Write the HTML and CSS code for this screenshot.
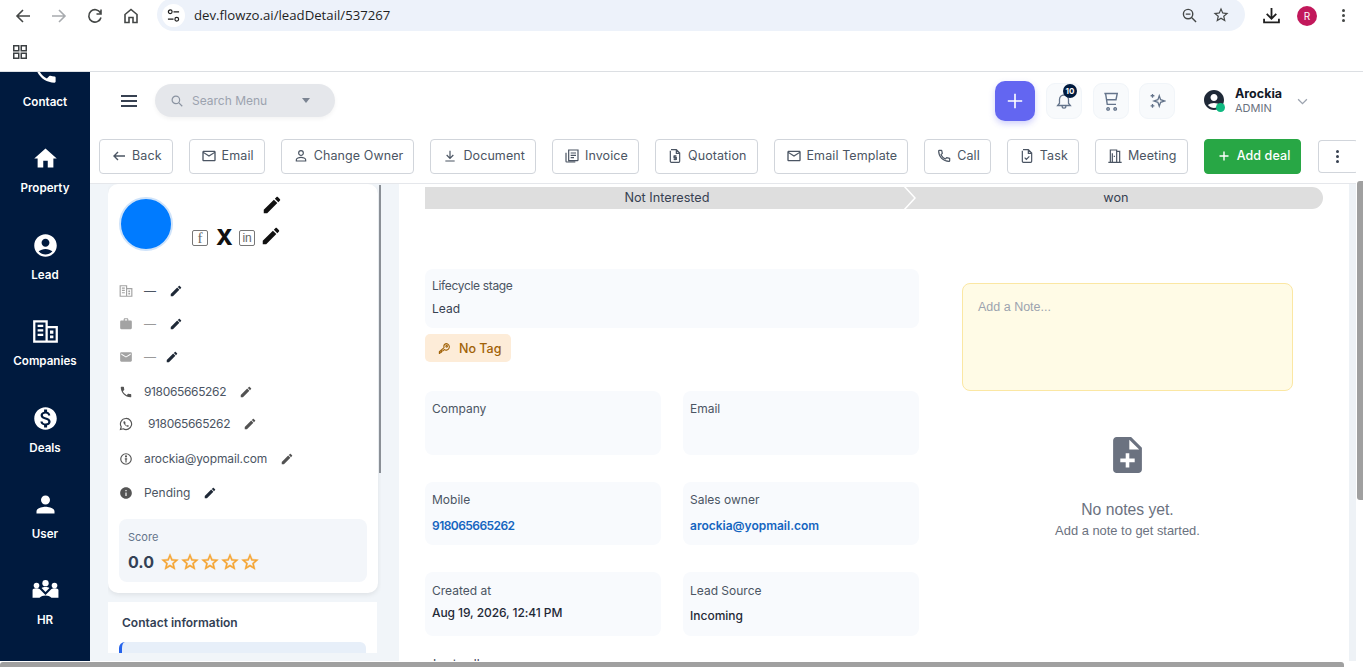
FILE: index.html
```html
<!DOCTYPE html>
<html lang="en">
<head>
<meta charset="utf-8">
<title>Lead detail</title>
<link rel="stylesheet" href="styles.css">
</head>
<body>
<svg class="sprite" aria-hidden="true">
  <symbol id="phone" viewBox="0 0 24 24"><path d="M6.62 10.79c1.44 2.83 3.76 5.14 6.59 6.59l2.2-2.2c.27-.27.67-.36 1.02-.24 1.12.37 2.33.57 3.57.57.55 0 1 .45 1 1V20c0 .55-.45 1-1 1-9.39 0-17-7.61-17-17 0-.55.45-1 1-1h3.5c.55 0 1 .45 1 1 0 1.25.2 2.45.57 3.57.11.35.03.74-.25 1.02l-2.2 2.2z"/></symbol>
  <symbol id="home" viewBox="0 0 24 24"><path d="M10 20v-6h4v6h5v-8h3L12 3 2 12h3v8z"/></symbol>
  <symbol id="account" viewBox="0 0 24 24"><path d="M12 2C6.48 2 2 6.48 2 12s4.48 10 10 10 10-4.48 10-10S17.52 2 12 2zm0 4c1.93 0 3.5 1.57 3.5 3.5S13.93 13 12 13s-3.5-1.57-3.5-3.5S10.07 6 12 6zm0 14c-2.03 0-4.43-.82-6.14-2.88C7.55 15.8 9.68 15 12 15s4.45.8 6.14 2.12C16.43 19.18 14.03 20 12 20z"/></symbol>
  <symbol id="company" viewBox="0 0 24 24"><path fill-rule="evenodd" d="M1 2h13v5h9v15H1zM3 4v16h9V4zm11 5v11h7V9zM5 6h5v2H5zm0 4h5v2H5zm0 4h5v2H5zm11-3h3v3h-3zm0 4.500h3v2.500h-3z"/></symbol>
  <symbol id="money" viewBox="0 0 24 24"><path d="M12 2C6.48 2 2 6.480 2 12s4.480 10 10 10 10-4.480 10-10S17.520 2 12 2zm1.410 16.090V20h-2.670v-1.930c-1.710-.36-3.160-1.460-3.270-3.400h1.960c.1 1.050.82 1.870 2.650 1.870 1.960 0 2.400-.98 2.400-1.590 0-.83-.44-1.610-2.670-2.140-2.480-.6-4.180-1.620-4.180-3.670 0-1.720 1.390-2.840 3.110-3.210V4h2.670v1.950c1.860.45 2.790 1.860 2.850 3.390H14.300c-.05-1.110-.64-1.870-2.220-1.870-1.500 0-2.400.68-2.400 1.640 0 .84.65 1.390 2.670 1.910s4.180 1.390 4.180 3.910c-.01 1.830-1.380 2.830-3.120 3.160z"/></symbol>
  <symbol id="person" viewBox="0 0 24 24"><path d="M12 12c2.210 0 4-1.790 4-4s-1.790-4-4-4-4 1.790-4 4 1.790 4 4 4zm0 2c-2.670 0-8 1.340-8 4v2h16v-2c0-2.660-5.330-4-8-4z"/></symbol>
  <symbol id="group" viewBox="0 0 24 24"><circle cx="12" cy="5.500" r="2.800"/><circle cx="4" cy="7.500" r="2.500"/><circle cx="20" cy="7.500" r="2.500"/><path d="M0.500 11.500c0-.8 1.500-1.500 3.500-1.500 1 0 1.900.2 2.700.6l5.300 5.400 5.300-5.400c.8-.4 1.700-.6 2.700-.6 2 0 3.500.7 3.500 1.500v7h-6.200c-1.400-1.300-3.300-2-5.300-2s-3.900.7-5.300 2H.5zM8.500 9.800c.9-.7 2.100-1 3.500-1s2.600.3 3.500 1L12 13.300z"/></symbol>
  <symbol id="edit" viewBox="0 0 24 24"><path d="M3 17.250V21h3.750L17.810 9.940l-3.750-3.750L3 17.250zM20.710 7.040c.39-.39.39-1.020 0-1.410l-2.340-2.340c-.39-.39-1.020-.39-1.410 0l-1.830 1.830 3.750 3.750 1.830-1.830z"/></symbol>
  <symbol id="work" viewBox="0 0 24 24"><path d="M20 6h-4V4c0-1.110-.89-2-2-2h-4c-1.110 0-2 .89-2 2v2H4c-1.110 0-1.990.89-1.990 2L2 19c0 1.110.89 2 2 2h16c1.110 0 2-.89 2-2V8c0-1.110-.89-2-2-2zm-6 0h-4V4h4v2z"/></symbol>
  <symbol id="mail" viewBox="0 0 24 24"><path d="M20 4H4c-1.100 0-2 .9-2 2v12c0 1.100.9 2 2 2h16c1.100 0 2-.9 2-2V6c0-1.100-.9-2-2-2zm0 4l-8 5-8-5V6l8 5 8-5v2z"/></symbol>
  <symbol id="mailo" viewBox="0 0 24 24"><path d="M20 4H4c-1.100 0-1.990.9-1.990 2L2 18c0 1.100.9 2 2 2h16c1.100 0 2-.9 2-2V6c0-1.100-.9-2-2-2zm0 14H4V8l8 5 8-5v10zm-8-7L4 6h16l-8 5z"/></symbol>
  <symbol id="info" viewBox="0 0 24 24"><path d="M12 2C6.480 2 2 6.480 2 12s4.480 10 10 10 10-4.480 10-10S17.520 2 12 2zm1 15h-2v-6h2v6zm0-8h-2V7h2v2z"/></symbol>
  <symbol id="star" viewBox="0 0 24 24"><path d="M22 9.240l-7.190-.62L12 2 9.190 8.630 2 9.240l5.460 4.730L5.820 21 12 17.270 18.180 21l-1.630-7.030L22 9.240zM12 15.400l-3.760 2.270 1-4.280-3.320-2.880 4.380-.38L12 6.100l1.710 4.040 4.380.38-3.320 2.880 1 4.280L12 15.400z"/></symbol>
  <symbol id="noteadd" viewBox="4 2 16 20"><path d="M14 2H6c-1.100 0-1.990.9-1.990 2L4 20c0 1.100.89 2 1.990 2H18c1.100 0 2-.9 2-2V8l-6-6zm2 14h-3v3h-2v-3H8v-2h3v-3h2v3h3v2zm-3-7V3.500L18.500 9H13z"/></symbol>
  <symbol id="personline" viewBox="0 0 24 24"><path fill="none" stroke="currentColor" stroke-width="1.800" d="M12 4a3.500 3.500 0 1 1 0 7 3.500 3.500 0 0 1 0-7zM5 19.500v-2c0-2 4-3.500 7-3.500s7 1.500 7 3.500v2z"/></symbol>
  <symbol id="download" viewBox="0 0 24 24"><path fill="none" stroke="currentColor" stroke-width="1.800" d="M12 4v11M7 10.500l5 5 5-5M5 19.500h14"/></symbol>
  <symbol id="invoice" viewBox="0 0 24 24"><path fill="none" stroke="currentColor" stroke-width="1.800" d="M7 3h14v15a1 1 0 0 1-1 1H7zM3 7v13a1 1 0 0 0 1 1h13M10 7.500h8M10 11h8M10 14.500h5"/></symbol>
  <symbol id="quote" viewBox="0 0 24 24"><path fill="none" stroke="currentColor" stroke-width="1.800" d="M6 2.500h8l5 5V20a1.500 1.500 0 0 1-1.500 1.500h-11A1.500 1.500 0 0 1 5 20V4M14 3v5h5M14.500 12h-4v2.500h3.500V17h-4M12 10.500v8"/></symbol>
  <symbol id="callline" viewBox="0 0 24 24"><path fill="none" stroke="currentColor" stroke-width="1.800" stroke-linejoin="round" d="M5 3.500h3.500l1 4.500-2 2c1.400 2.800 3.700 5.100 6.500 6.500l2-2 4.500 1v3.500c0 .6-.4 1-1 1C10.700 20 4 13.300 4 4.500c0-.6.400-1 1-1z"/></symbol>
  <symbol id="task" viewBox="0 0 24 24"><path fill="none" stroke="currentColor" stroke-width="1.800" d="M6 2.500h8l5 5V20a1.500 1.500 0 0 1-1.500 1.500h-11A1.500 1.500 0 0 1 5 20V4M14 3v5h5M8.500 14.500l2.500 2.500 4.500-4.500"/></symbol>
  <symbol id="door" viewBox="0 0 24 24"><path fill="none" stroke="currentColor" stroke-width="1.800" d="M2 21.500h20M5 21V3h9.500v18M14.500 5H19v16M11 11.500v2M8 21V8"/></symbol>
  <symbol id="key" viewBox="0 0 24 24"><path fill="none" stroke="currentColor" stroke-width="2" stroke-linejoin="round" d="M15 3a6 6 0 1 1-3.500 10.900L9 16.500H6.500V19H4l-.5 2H2.500v-3l8.700-7.500A6 6 0 0 1 15 3zM16 6.500a1.500 1.500 0 1 1 0 3 1.500 1.500 0 0 1 0-3z"/></symbol>
</svg>

<div class="chrome-bar">
  <div class="nav-icons">
    <svg class="nav-icon" viewBox="0 0 16 16"><path d="M15 8H2M8 2 2 8l6 6"/></svg>
    <svg class="nav-icon nav-off" viewBox="0 0 16 16"><path d="M1 8h13M8 2l6 6-6 6"/></svg>
    <svg class="nav-icon" viewBox="0 0 16 16"><path d="M13.500 5A6.200 6.200 0 1 0 14 9.500M14 1.500V6H9.500"/></svg>
    <svg class="nav-icon" viewBox="0 0 16 16"><path d="M2 14.500V6.500L8 1.500l6 5v8h-4v-5H6v5z"/></svg>
  </div>
  <div class="omnibox">
    <span class="tune"><svg viewBox="0 0 14 14"><circle cx="3.500" cy="3" r="2"/><path d="M7 3h6M1 11h6"/><circle cx="10.500" cy="11" r="2"/></svg></span>
    <span class="url">dev.flowzo.ai/leadDetail/537267</span>
    <svg class="omni-zoom" viewBox="0 0 16 16"><circle cx="6.500" cy="6.500" r="5"/><path d="M10.500 10.500 15 15M4 6.500h5"/></svg>
    <svg class="omni-star" viewBox="0 0 24 24"><use href="#star"/></svg>
  </div>
  <svg class="chrome-dl" viewBox="0 0 16 16"><path d="M8 1v9.500M3.500 6.500 8 11l4.500-4.500M1 11v3.500h14V11"/></svg>
  <span class="profile">R</span>
  <span class="chrome-dots"><i></i><i></i><i></i></span>
</div>
<div class="bookmarks">
  <svg class="apps" viewBox="0 0 14 14"><rect x="0.750" y="0.750" width="5" height="5"/><rect x="8.250" y="0.750" width="5" height="5"/><rect x="0.750" y="8.250" width="5" height="5"/><rect x="8.250" y="8.250" width="5" height="5"/></svg>
</div>

<div class="app">
  <div class="app-top">
    <nav class="sidebar">
      <a class="side-item"><svg class="side-icon"><use href="#phone"/></svg><span>Contact</span></a>
      <a class="side-item"><svg class="side-icon"><use href="#home"/></svg><span>Property</span></a>
      <a class="side-item"><svg class="side-icon"><use href="#account"/></svg><span>Lead</span></a>
      <a class="side-item"><svg class="side-icon"><use href="#company"/></svg><span>Companies</span></a>
      <a class="side-item"><svg class="side-icon"><use href="#money"/></svg><span>Deals</span></a>
      <a class="side-item"><svg class="side-icon"><use href="#person"/></svg><span>User</span></a>
      <a class="side-item"><svg class="side-icon"><use href="#group"/></svg><span>HR</span></a>
    </nav>

    <div class="main">
      <header class="header">
        <span class="burger"><i></i><i></i><i></i></span>
        <div class="search">
          <svg class="search-icon" viewBox="0 0 16 16"><circle cx="6.500" cy="6.500" r="5"/><path d="M10.500 10.500 15 15"/></svg>
          <span class="search-text">Search Menu</span>
          <span class="search-caret"></span>
        </div>
        <button class="plus-btn"><svg viewBox="0 0 20 20"><path d="M10 2v16M2 10h16"/></svg></button>
        <span class="tool-btn">
          <svg viewBox="0 0 24 24"><path d="M12 4a6 6 0 0 0-6 6v5l-2.500 3h17L18 15v-5a6 6 0 0 0-6-6zM9.500 19a2.500 2.500 0 0 0 5 0"/></svg>
          <b class="badge">10</b>
        </span>
        <span class="tool-btn"><svg class="tool-cart" viewBox="0 0 24 24"><path d="M4 3h15.500L18 10.500H7M5.500 3l2 13H18M8.500 20a1.500 1.500 0 1 0 .01 0M17 20a1.500 1.500 0 1 0 .01 0"/></svg></span>
        <span class="tool-btn"><svg viewBox="0 0 24 24"><path d="M15 5l1.800 5.200L22 12l-5.200 1.800L15 19l-1.800-5.200L8 12l5.200-1.800zM6 2.500v5M3.500 5h5M6 16v5M3.500 18.500h5"/></svg></span>
        <div class="user">
          <span class="user-avatar"><svg viewBox="0 0 24 24"><use href="#account"/></svg><i class="online"></i></span>
          <span class="user-text"><b>Arockia</b><small>ADMIN</small></span>
          <svg class="user-chevron" viewBox="0 0 12 8"><path d="M1 1.500l5 5 5-5"/></svg>
        </div>
      </header>

      <div class="actions">
        <button class="act"><svg class="act-icon" viewBox="0 0 16 16"><path class="ln" d="M14 8H3M7 4 3 8l4 4"/></svg>Back</button>
        <button class="act"><svg class="act-icon"><use href="#mailo"/></svg>Email</button>
        <button class="act"><svg class="act-icon"><use href="#personline"/></svg>Change Owner</button>
        <button class="act"><svg class="act-icon"><use href="#download"/></svg>Document</button>
        <button class="act"><svg class="act-icon"><use href="#invoice"/></svg>Invoice</button>
        <button class="act"><svg class="act-icon"><use href="#quote"/></svg>Quotation</button>
        <button class="act"><svg class="act-icon"><use href="#mailo"/></svg>Email Template</button>
        <button class="act"><svg class="act-icon"><use href="#callline"/></svg>Call</button>
        <button class="act"><svg class="act-icon"><use href="#task"/></svg>Task</button>
        <button class="act"><svg class="act-icon"><use href="#door"/></svg>Meeting</button>
        <button class="act act-green"><svg class="act-icon" viewBox="0 0 16 16"><path class="ln" d="M8 3.500v9M3.500 8h9"/></svg>Add deal</button>
        <button class="act act-more"><span class="more-dots"><i></i><i></i><i></i></span></button>
      </div>

      <div class="body">
        <aside class="left-pane">
          <section class="profile-card">
            <div class="profile-head">
              <span class="photo"></span>
              <div class="profile-side">
                <svg class="edit-big"><use href="#edit"/></svg>
                <div class="socials">
                  <span class="soc">f</span>
                  <span class="soc-x">X</span>
                  <span class="soc soc-in">in</span>
                  <svg class="edit-big"><use href="#edit"/></svg>
                </div>
              </div>
            </div>
            <div class="rows">
              <div class="row"><svg class="row-icon light"><use href="#company"/></svg><span class="row-text">—</span><svg class="row-edit dark"><use href="#edit"/></svg></div>
              <div class="row"><svg class="row-icon light"><use href="#work"/></svg><span class="row-text pale">—</span><svg class="row-edit dark"><use href="#edit"/></svg></div>
              <div class="row"><svg class="row-icon light"><use href="#mail"/></svg><span class="row-text pale">—</span><svg class="row-edit dark narrow"><use href="#edit"/></svg></div>
              <div class="row row-p2"><svg class="row-icon"><use href="#phone"/></svg><span class="row-text digits">918065665262</span><svg class="row-edit"><use href="#edit"/></svg></div>
              <div class="row row-m1"><svg class="row-icon" viewBox="0 0 24 24"><path fill="none" stroke="currentColor" stroke-width="2" d="M12 2.500a9.500 9.500 0 0 0-8.200 14.300L2.500 21.500l4.800-1.300A9.500 9.500 0 1 0 12 2.500z"/><path d="M8.800 7.200c-.5 0-1.300.7-1.300 2 0 2.600 3.500 6.800 7 7.600 1.500.2 2.400-.8 2.500-1.700l-2.300-1.300-1 1c-1.400-.6-2.700-1.900-3.300-3.300l1-1-1-2.800z"/></svg><span class="row-text digits wa">918065665262</span><svg class="row-edit"><use href="#edit"/></svg></div>
              <div class="row row-p2"><svg class="row-icon" viewBox="0 0 24 24"><circle cx="12" cy="12" r="9" fill="none" stroke="currentColor" stroke-width="2"/><circle cx="12" cy="7.500" r="1.800"/><path d="M10 10.500h4V13h-1v5h-2v-5h-1z"/></svg><span class="row-text mail-text">arockia@yopmail.com</span><svg class="row-edit"><use href="#edit"/></svg></div>
              <div class="row row-p1"><svg class="row-icon"><use href="#info"/></svg><span class="row-text">Pending</span><svg class="row-edit dark"><use href="#edit"/></svg></div>
            </div>
            <div class="score">
              <span class="score-label">Score</span>
              <div class="score-line">
                <b class="score-num">0.0</b>
                <svg class="star"><use href="#star"/></svg>
                <svg class="star"><use href="#star"/></svg>
                <svg class="star"><use href="#star"/></svg>
                <svg class="star"><use href="#star"/></svg>
                <svg class="star"><use href="#star"/></svg>
              </div>
            </div>
          </section>
          <section class="contact-card">
            <h3 class="contact-title">Contact information</h3>
            <div class="contact-tab"></div>
          </section>
          <span class="pane-thumb"></span>
        </aside>

        <main class="panel">
          <div class="pipeline">
            <span class="stage stage-a">Not Interested</span>
            <span class="stage stage-b">won</span>
            <svg class="chevron" viewBox="0 0 14 22"><path d="M1 -1 12 11 1 23"/></svg>
          </div>
          <div class="panel-cols">
            <div class="fields">
              <div class="field field-wide"><span class="f-label f-narrow">Lifecycle stage</span><span class="f-value plain">Lead</span></div>
              <span class="tag"><svg class="tag-icon"><use href="#key"/></svg>No Tag</span>
              <div class="field-grid">
                <div class="field"><span class="f-label">Company</span></div>
                <div class="field"><span class="f-label">Email</span></div>
                <div class="field"><span class="f-label">Mobile</span><a class="f-value link f-digits">918065665262</a></div>
                <div class="field"><span class="f-label">Sales owner</span><a class="f-value link">arockia@yopmail.com</a></div>
                <div class="field field-low"><span class="f-label">Created at</span><span class="f-value tight">Aug 19, 2026, 12:41 PM</span></div>
                <div class="field field-low"><span class="f-label">Lead Source</span><span class="f-value source">Incoming</span></div>
              </div>
              <div class="f-next">Last call</div>
            </div>
            <div class="notes">
              <div class="note-box">Add a Note...</div>
              <div class="note-empty">
                <svg class="note-icon"><use href="#noteadd"/></svg>
                <p class="note-title">No notes yet.</p>
                <p class="note-sub">Add a note to get started.</p>
              </div>
            </div>
          </div>
        </main>
        <div class="gutter"></div>
      </div>
    </div>
    <div class="vtrack"><span class="vthumb"></span></div>
  </div>
  <div class="htrack"><span class="hthumb"></span></div>
</div>
</body>
</html>
```

FILE: styles.css
```css
* { box-sizing: border-box; }
html, body { margin: 0; height: 667px; overflow: hidden; background: #fff; }
body { font-family: Inter, "Liberation Sans", sans-serif; color: #374151; }
.sprite { display: none; }
svg { display: block; flex: none; }
button { font-family: inherit; }

/* browser chrome */
.chrome-bar { height: 31px; display: flex; align-items: center; padding-left: 5px; background: #fff; }
.nav-icons { display: flex; width: 152px; }
.nav-icon { width: 16px; height: 16px; margin: 0 10px; fill: none; stroke: #444746; stroke-width: 1.600; }
.nav-off { stroke: #a8abaf; }
.omnibox { width: 1088px; height: 33px; margin-top: -2px; border-radius: 17px; background: #edf2fa; display: flex; align-items: center; padding-left: 5px; }
.tune { width: 23px; height: 23px; border-radius: 50%; background: #fff; display: flex; align-items: center; justify-content: center; margin-top: 1px; }
.tune svg { width: 13px; height: 13px; fill: none; stroke: #1f1f1f; stroke-width: 1.300; }
.url { margin-left: 9px; font: 13.200px "Open Sans", "Liberation Sans", sans-serif; color: #1f1f1f; flex: 1; }
.omni-zoom { width: 15px; height: 15px; fill: none; stroke: #444746; stroke-width: 1.500; margin: 1px 15px 0 0; }
.omni-star { width: 18px; height: 18px; fill: #444746; margin: 1px 15px 0 0; }
.chrome-dl { width: 17px; height: 17px; fill: none; stroke: #1f1f1f; stroke-width: 1.700; margin-left: 18px; }
.profile { width: 20px; height: 20px; border-radius: 50%; background: #c2185b; color: #fff; font-size: 10px; text-align: center; line-height: 20px; margin-left: 17px; }
.chrome-dots { display: flex; flex-direction: column; gap: 2px; margin-left: 25px; }
.chrome-dots i { width: 3px; height: 3px; border-radius: 50%; background: #444746; }
.bookmarks { height: 41px; border-bottom: 1px solid #dcdfe3; padding: 14px 0 0 13px; background: #fff; }
.apps { width: 14px; height: 14px; fill: none; stroke: #3c4043; stroke-width: 1.500; }

/* app frame */
.app { height: 595px; display: flex; flex-direction: column; }
.app-top { height: 589px; display: flex; }
.sidebar { width: 90px; flex: none; background: #001a3e; overflow: hidden; display: flex; flex-direction: column; }
.side-item { flex: none; height: 86.400px; display: flex; flex-direction: column; align-items: center; color: #fff; }
.side-item:first-child { margin-top: -13px; }
.side-icon { width: 27px; height: 27px; fill: #fff; margin-bottom: 9px; }
.side-item span { font-size: 11.600px; font-weight: 600; line-height: 15px; }
.main { width: 1266px; flex: none; display: flex; flex-direction: column; min-height: 0; }

/* header */
.header { height: 58px; flex: none; display: flex; align-items: center; padding-left: 31px; background: #fff; }
.burger { width: 16px; display: flex; flex-direction: column; gap: 3px; }
.burger i { height: 2px; background: #374151; }
.search { width: 180px; height: 33px; margin: -1px 0 0 18px; border-radius: 17px; background: #e5e7eb; box-shadow: 0 2px 4px rgba(0,0,0,.05); display: flex; align-items: center; padding-left: 16px; }
.search-icon { width: 12px; height: 12px; fill: none; stroke: #8a93a1; stroke-width: 1.600; }
.search-text { font-size: 12px; color: #9ca3af; margin-left: 9px; width: 110px; }
.search-caret { border: 4.500px solid transparent; border-top: 5px solid #7b8492; border-bottom: 0; }
.plus-btn { width: 40px; height: 40px; margin-left: 660px; border: 0; padding: 0; border-radius: 10px; background: #6366f1; box-shadow: 0 3px 6px rgba(99,102,241,.3); display: flex; align-items: center; justify-content: center; }
.plus-btn svg { width: 18px; height: 18px; fill: none; stroke: #fff; stroke-width: 1.800; }
.tool-btn { position: relative; width: 36px; height: 36px; margin: -1px 0 0 11px; border-radius: 9px; background: #f8fafc; border: 1px solid #f1f5f9; display: flex; align-items: center; justify-content: center; }
.tool-btn + .tool-btn { margin-left: 11px; }
.tool-btn + .tool-btn + .tool-btn { margin-left: 10px; }
.tool-btn svg { width: 18px; height: 18px; fill: none; stroke: #64748b; stroke-width: 1.700; }
.tool-btn .tool-cart { width: 20px; height: 20px; }
.badge { position: absolute; top: 0; right: 4px; width: 14px; height: 14px; border-radius: 50%; background: #001a3e; color: #fff; font-size: 8px; font-weight: 700; text-align: center; line-height: 14px; }
.user { display: flex; align-items: center; margin: -2px 0 0 29px; }
.user-avatar { position: relative; width: 20px; height: 20px; }
.user-avatar svg { width: 24px; height: 24px; margin: -2px; fill: #1f2937; }
.online { position: absolute; right: -1px; bottom: -2px; width: 9px; height: 9px; border-radius: 50%; background: #10b981; }
.user-text { display: flex; flex-direction: column; margin-left: 11px; width: 62px; }
.user-text b { font-size: 12.500px; font-weight: 700; color: #111827; line-height: 15px; }
.user-text small { font-size: 11px; color: #6b7280; line-height: 14px; }
.user-chevron { width: 11px; height: 7px; fill: none; stroke: #9ca3af; stroke-width: 1.500; margin: 2px 0 0 0; }

/* action bar */
.actions { height: 54px; flex: none; display: flex; gap: 16px; padding: 9px 0 0 9px; background: #fff; border-bottom: 1px solid #e5e7eb; overflow: hidden; align-items: flex-start; }
.act { height: 35px; flex: none; padding: 0 10px 2px 11px; border: 1px solid #d1d5db; border-radius: 4px; background: #fff; color: #4b5563; font-size: 12.500px; font-weight: 400; display: flex; align-items: center; gap: 5px; white-space: nowrap; letter-spacing: .1px; }
.act-icon { width: 16px; height: 16px; fill: currentColor; color: #4b5563; }
.act-icon .ln { fill: none; stroke: currentColor; stroke-width: 1.400; }
.act-green { background: #28a745; border-color: #28a745; color: #fff; font-weight: 500; }
.act-green .act-icon { color: #fff; }
.act-more { width: 40px; height: 33px; padding: 0 0 0 17px; border-right: 0; margin-left: 1px; margin-top: 1px; }
.more-dots { display: flex; flex-direction: column; gap: 2px; }
.more-dots i { width: 3px; height: 3px; border-radius: 50%; background: #374151; }

/* body */
.body { flex: 1; min-height: 0; display: flex; background: #f1f5f9; overflow: hidden; }
.left-pane { position: relative; width: 273px; height: 469px; flex: none; margin-left: 18px; overflow: hidden; }
.pane-thumb { position: absolute; left: 271px; top: 1px; width: 2px; height: 288px; background: #8a8f96; }
.profile-card { width: 270px; height: 409px; background: #fff; border-radius: 10px; box-shadow: 0 2px 5px rgba(0,0,0,.08); padding: 13px 11px 0; }
.profile-head { display: flex; height: 54px; }
.photo { width: 54px; height: 54px; border-radius: 50%; background: #007bff; border: 2px solid #cfe3fa; flex: none; }
.profile-side { margin-left: 19px; display: flex; flex-direction: column; }
.edit-big { width: 22px; height: 22px; fill: #111; }
.profile-side > .edit-big { margin: -3px 0 0 69px; }
.socials { display: flex; align-items: center; margin-top: 9px; }
.soc { width: 16px; height: 16px; border: 1px solid #777; border-radius: 2px; font: 400 15px/14px "Liberation Serif", serif; color: #666; text-align: center; margin-top: 3px; overflow: hidden; }
.soc-in { font: 400 12px/14px "Liberation Sans", sans-serif; letter-spacing: -.2px; }
.soc-x { width: 16px; font: 800 22px/20px Inter, sans-serif; color: #111; margin: 1px 7px 0 8px; text-align: center; }
.socials .edit-big { margin-left: 5px; }
.rows { margin-top: 23px; }
.row { height: 33px; display: flex; align-items: center; color: #4b5563; }
.row-p2 { margin-top: 2px; }
.row-m1 { margin-top: -1px; }
.row-p1 { margin-top: 1px; }
.row-icon { width: 14px; height: 14px; fill: currentColor; color: #555; }
.row-icon.light { color: #a3a3a3; }
.row-text { font-size: 12px; margin-left: 11px; color: #4b5563; }
.row-text.pale { color: #9a9a9a; }
.row-text.digits { letter-spacing: -.35px; }
.row-text.wa { margin-left: 15px; }
.row-text.mail-text { letter-spacing: -.1px; }
.row-edit { width: 14px; height: 14px; fill: #525252; margin-left: 13px; }
.row-edit.dark { fill: #1f2937; }
.row-edit.narrow { margin-left: 9px; }
.score { height: 63px; margin-top: 10px; width: 248px; background: #f3f6fa; border-radius: 8px; padding: 11px 9px 0; display: flex; flex-direction: column; }
.score-label { font-size: 11px; color: #64748b; line-height: 14px; }
.score-line { display: flex; align-items: center; margin-top: 7px; }
.score-num { font-size: 16px; font-weight: 700; color: #334155; margin-right: 6px; line-height: 22px; }
.star { width: 20px; height: 20px; fill: #f5a534; stroke: #f5a534; stroke-width: .5px; }
.contact-card { width: 269px; height: 70px; margin-top: 9px; background: #fff; padding: 12px 11px 0; }
.contact-title { margin: 0 0 0 3px; font-size: 12px; font-weight: 600; color: #334155; line-height: 18px; }
.contact-tab { width: 247px; height: 30px; margin-top: 10px; background: #e7eff9; border-left: 3px solid #2563eb; border-radius: 6px; }

/* main panel */
.panel { width: 950px; flex: none; margin-left: 18px; background: #fff; padding: 3px 0 0 26px; overflow: hidden; }
.pipeline { position: relative; width: 898px; height: 22px; display: flex; border-radius: 0 11px 11px 0; background: #dedede; overflow: hidden; font-size: 12.700px; color: #374151; line-height: 21px; text-align: center; }
.stage-a { width: 484px; }
.stage-b { width: 414px; }
.chevron { position: absolute; left: 478px; top: 0; width: 14px; height: 22px; fill: none; stroke: #fff; stroke-width: 1.500; }
.panel-cols { display: flex; margin-top: 60px; }
.fields { width: 494px; flex: none; }
.field { height: 100%; background: #f8fafd; border-radius: 8px; padding: 9px 7px 0; display: flex; flex-direction: column; }
.field-wide { height: 59px; padding-top: 8px; }
.field-low { padding-top: 10px; }
.f-label { font-size: 12px; color: #4b5563; line-height: 18px; }
.f-narrow { letter-spacing: -.33px; }
.f-value { font-size: 12px; font-weight: 500; color: #1f2937; line-height: 18px; margin-top: 8px; }
.f-digits { letter-spacing: -.55px; }
.f-value.tight { margin-top: 4px; letter-spacing: -.08px; }
.f-value.source { margin-top: 7px; }
.f-value.plain { font-weight: 400; color: #374151; margin-top: 5px; }
.f-value.link { color: #1565c0; font-weight: 600; }
.tag { width: 86px; height: 28px; margin-top: 6px; background: #fdecd8; border-radius: 5px; display: flex; align-items: center; gap: 8px; padding-left: 13px; font-size: 12.500px; color: #a16207; font-weight: 500; }
.tag-icon { width: 13px; height: 13px; }
.field-grid { display: grid; grid-template-columns: 236px 236px; grid-template-rows: 64px 63px 64px; column-gap: 22px; row-gap: 27px; margin-top: 29px; }
.f-next { margin: 19px 0 0 8px; font-size: 12px; color: #374151; line-height: 18px; }
.notes { width: 331px; flex: none; margin: 14px 0 0 43px; font-family: "Liberation Sans", Arial, sans-serif; }
.note-box { height: 108px; background: #fffbe6; border: 1px solid #fbe7a3; border-radius: 8px; padding: 16px 15px; font-size: 12.500px; color: #9ca3af; line-height: 15px; }
.note-empty { display: flex; flex-direction: column; align-items: center; padding-top: 46px; color: #6b7280; }
.note-icon { width: 29px; height: 36px; fill: #6b7280; }
.note-title { margin: 27px 0 0; font-size: 15.700px; line-height: 20px; }
.note-sub { margin: 3px 0 0; font-size: 12.900px; line-height: 15px; }
.gutter { flex: 1; background: #eef2f6; }

/* scrollbars */
.vtrack { position: relative; flex: 1; background: #fff; }
.vthumb { position: absolute; left: 1px; top: 109px; width: 6px; height: 319px; background: #a0a0a0; border-radius: 3px 0 0 3px; }
.htrack { height: 6px; background: #fff; padding-top: 1px; }
.hthumb { display: block; width: 1344px; height: 5px; background: #a0a0a0; border-radius: 3px 3px 0 0; }
```
